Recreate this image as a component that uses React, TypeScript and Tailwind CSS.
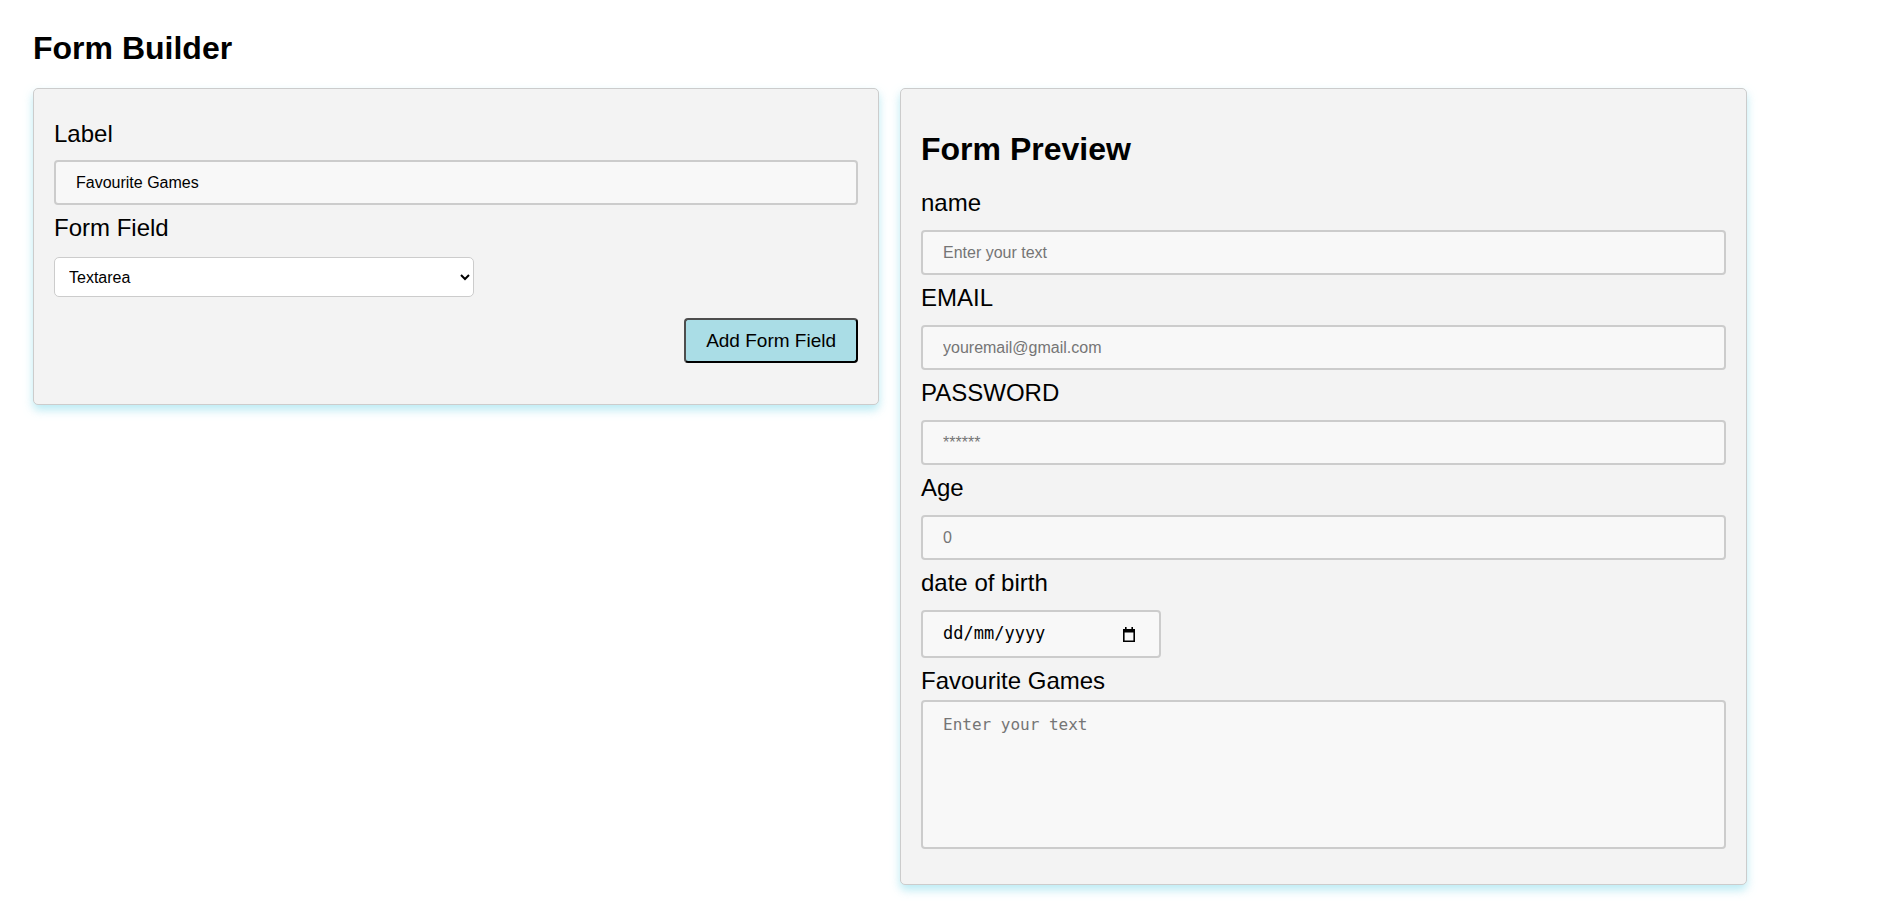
import React from 'react';

type Field = {
  id: string;
  label: string;
  type: 'text' | 'email' | 'password' | 'number' | 'date' | 'textarea';
  placeholder?: string;
};

const previewFields: Field[] = [
  { id: 'name', label: 'name', type: 'text', placeholder: 'Enter your text' },
  { id: 'email', label: 'EMAIL', type: 'email', placeholder: 'youremail@gmail.com' },
  { id: 'password', label: 'PASSWORD', type: 'password', placeholder: '******' },
  { id: 'age', label: 'Age', type: 'number', placeholder: '0' },
  { id: 'dob', label: 'date of birth', type: 'date' },
  { id: 'games', label: 'Favourite Games', type: 'textarea', placeholder: 'Enter your text' },
];

const cardClass =
  'rounded-[5px] border border-[#cccccc] bg-[#f3f3f3] p-5 shadow-[0_5px_10px_rgba(140,220,235,0.6)]';

const inputClass =
  'block h-[45px] w-full rounded-[4px] border-2 border-[#cccccc] bg-[#f8f8f8] px-5 text-[16px] text-black outline-none placeholder:text-[#757575]';

function CalendarIcon() {
  return (
    <svg width="14" height="15" viewBox="0 0 14 15" fill="currentColor">
      <rect x="3" y="0" width="1.6" height="3" />
      <rect x="9.4" y="0" width="1.6" height="3" />
      <path fillRule="evenodd" d="M1 2h12v13H1z M2.6 5.4h8.8v8h-8.8z" />
    </svg>
  );
}

function PreviewField({ field }: { field: Field }) {
  if (field.type === 'date') {
    return (
      <div>
        <label className="block text-[24px] leading-[27px]">{field.label}</label>
        <div className="mt-[14px] mb-[9px] flex h-[48px] w-[240px] items-center justify-between rounded-[4px] border-2 border-[#cccccc] bg-[#f8f8f8] pl-5 pr-[23px] font-['DejaVu_Sans_Mono',monospace] text-[17px] text-black">
          <span>dd/mm/yyyy</span>
          <CalendarIcon />
        </div>
      </div>
    );
  }

  if (field.type === 'textarea') {
    return (
      <div>
        <label className="block text-[24px] leading-[27px]">{field.label}</label>
        <textarea
          placeholder={field.placeholder}
          className="mt-[6px] mb-[15px] block h-[149px] w-full resize-none rounded-[4px] border-2 border-[#cccccc] bg-[#f8f8f8] px-5 py-[11px] font-['DejaVu_Sans_Mono',monospace] text-[16px] text-black outline-none placeholder:text-[#757575]"
        />
      </div>
    );
  }

  return (
    <div>
      <label className="block text-[24px] leading-[27px]">{field.label}</label>
      <input type={field.type} placeholder={field.placeholder} className={`mt-[14px] mb-[9px] ${inputClass}`} />
    </div>
  );
}

export default function App() {
  return (
    <div className="min-h-screen bg-white px-[33px] pt-[30px] font-['Liberation_Sans',Arial,sans-serif] text-black">
      <h1 className="mb-[21px] text-[32px] font-bold leading-[37px]">Form Builder</h1>

      <div className="flex items-start gap-[21px]">
        {/* Builder */}
        <div className={`w-[846px] ${cardClass}`}>
          <label className="mt-[11px] block text-[24px] leading-[27px]">Label</label>
          <input type="text" defaultValue="Favourite Games" className={`mt-[13px] mb-[9px] ${inputClass}`} />

          <label className="block text-[24px] leading-[27px]">Form Field</label>
          <select
            defaultValue="textarea"
            className="mt-[16px] block h-[40px] w-[420px] rounded-[5px] border border-[#cccccc] bg-white pl-[10px] pr-2 text-[16px] text-black outline-none"
          >
            <option value="text">Text</option>
            <option value="email">Email</option>
            <option value="password">Password</option>
            <option value="number">Number</option>
            <option value="date">Date</option>
            <option value="textarea">Textarea</option>
          </select>

          <div className="flex justify-end">
            <button className="mt-[21px] mb-[21px] h-[45px] rounded-[4px] border-2 border-black border-t-[#4d4d4d] border-l-[#4d4d4d] bg-[#aadde6] px-5 text-[19px] leading-[21px] text-black">
              Add Form Field
            </button>
          </div>
        </div>

        {/* Preview */}
        <div className={`w-[847px] ${cardClass}`}>
          <h2 className="mt-[22px] mb-[22px] text-[32px] font-bold leading-[36px]">Form Preview</h2>
          {previewFields.map((field) => (
            <PreviewField key={field.id} field={field} />
          ))}
        </div>
      </div>
    </div>
  );
}
